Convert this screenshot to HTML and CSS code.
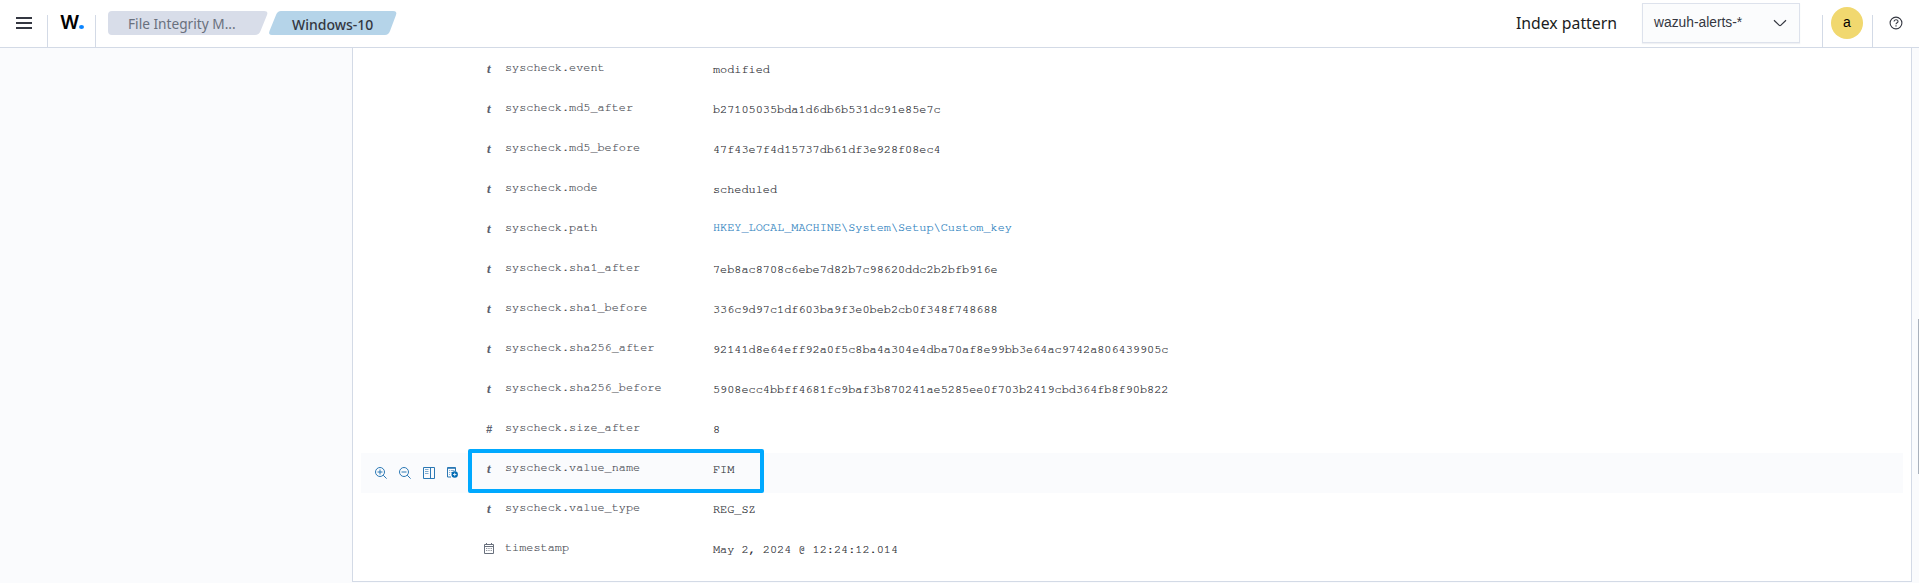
FILE: index.html
```html
<!DOCTYPE html>
<html lang="en">
<head>
<meta charset="utf-8">
<title>File Integrity Monitoring</title>
<link rel="stylesheet" href="styles.css">
</head>
<body>
<header class="header">
  <button class="menu" aria-label="Menu"><span></span><span></span><span></span></button>
  <div class="logo">W<i class="logo-dot"></i></div>
  <nav class="crumbs">
    <span class="crumb crumb-first">File Integrity M...</span>
    <span class="crumb crumb-last">Windows-10</span>
  </nav>
  <div class="header-right">
    <span class="pattern-label">Index pattern</span>
    <div class="select"><span>wazuh-alerts-*</span>
      <svg width="14" height="8" viewBox="0 0 14 8"><path d="M1 1.2 6.3 6.4Q7 7 7.700 6.400L13 1.200" fill="none" stroke="#343741" stroke-width="1.2"/></svg>
    </div>
    <div class="user"><span class="avatar">a</span></div>
    <svg class="help" width="14" height="14" viewBox="0 0 14 14"><circle cx="7" cy="7" r="5.9" fill="none" stroke="#343741" stroke-width="1.1"/><path d="M5 5.6C5 3.2 9 3.2 9 5.4 9 6.8 7 6.7 7 8.3" fill="none" stroke="#343741" stroke-width="1.1"/><rect x="6.4" y="9.3" width="1.2" height="1.2" fill="#343741"/></svg>
  </div>
</header>
<main class="body">
  <section class="panel">
    <div class="row"><span class="type t">t</span><span class="name">syscheck.event</span><span class="value">modified</span></div>
    <div class="row"><span class="type t">t</span><span class="name">syscheck.md5_after</span><span class="value">b27105035bda1d6db6b531dc91e85e7c</span></div>
    <div class="row"><span class="type t">t</span><span class="name">syscheck.md5_before</span><span class="value">47f43e7f4d15737db61df3e928f08ec4</span></div>
    <div class="row"><span class="type t">t</span><span class="name">syscheck.mode</span><span class="value">scheduled</span></div>
    <div class="row"><span class="type t">t</span><span class="name">syscheck.path</span><a class="value link">HKEY_LOCAL_MACHINE\System\Setup\Custom_key</a></div>
    <div class="row"><span class="type t">t</span><span class="name">syscheck.sha1_after</span><span class="value">7eb8ac8708c6ebe7d82b7c98620ddc2b2bfb916e</span></div>
    <div class="row"><span class="type t">t</span><span class="name">syscheck.sha1_before</span><span class="value">336c9d97c1df603ba9f3e0beb2cb0f348f748688</span></div>
    <div class="row"><span class="type t">t</span><span class="name">syscheck.sha256_after</span><span class="value">92141d8e64eff92a0f5c8ba4a304e4dba70af8e99bb3e64ac9742a806439905c</span></div>
    <div class="row"><span class="type t">t</span><span class="name">syscheck.sha256_before</span><span class="value">5908ecc4bbff4681fc9baf3b870241ae5285ee0f703b2419cbd364fb8f90b822</span></div>
    <div class="row"><span class="type hash">#</span><span class="name">syscheck.size_after</span><span class="value">8</span></div>
    <div class="row hovered">
      <span class="actions">
        <svg width="12" height="12" viewBox="0 0 12 12"><circle cx="5" cy="5" r="4.5"/><path d="M2.5 5h5M5 2.5v5M8.2 8.2l3.4 3.4"/></svg>
        <svg width="12" height="12" viewBox="0 0 12 12"><circle cx="5" cy="5" r="4.5"/><path d="M2.5 5h5M8.2 8.2l3.4 3.4"/></svg>
        <svg width="12" height="12" viewBox="0 0 12 12"><path d="M.5.5h11v11H.5zM7.500.5v11"/><path class="faint" d="M2 2.500h3.500M2 4.500h3.500M2 6.500h3.500"/></svg>
        <svg width="12" height="12" viewBox="0 0 12 12"><path d="M8.500 4.500V.5h-8v9.500H4M.5 1.300h8"/><path class="faint" d="M2 3.500h.9M3.800 3.500H7.500M2 5.500h.9M3.800 5.500H6M2 7.500h.9"/><circle class="solid" cx="7.700" cy="7.500" r="3.200"/><path class="plus" d="M6 7.500h3.400M7.700 5.800v3.400"/></svg>
      </span>
      <span class="type t">t</span><span class="name">syscheck.value_name</span><span class="value">FIM</span>
      <span class="highlight"></span>
    </div>
    <div class="row"><span class="type t">t</span><span class="name">syscheck.value_type</span><span class="value">REG_SZ</span></div>
    <div class="row"><span class="type"><svg class="calendar" width="10" height="11" viewBox="0 0 10 11"><path d="M.5 1.500h9v9h-9zM.5 3.500h9M2.500 0v2M7.500 0v2" fill="none" stroke="#69707d"/><path d="M2 5.500h6M2 7.500h6" fill="none" stroke="#69707d" stroke-dasharray="1 .7" stroke-opacity=".75"/></svg></span><span class="name">timestamp</span><span class="value">May 2, 2024 @ 12:24:12.014</span></div>
  </section>
  <span class="thumb"></span>
</main>
</body>
</html>
```

FILE: styles.css
```css
* { box-sizing: border-box; }
body { margin: 0; height: 583px; overflow: hidden; background: #fafbfd; color: #343741; font-family: "Noto Sans", sans-serif; }
.header { display: flex; height: 48px; background: #fff; border-bottom: 1px solid #d3dae6; }
.menu { display: flex; flex-direction: column; gap: 3px; width: 47px; padding: 17px 0 0 16px; border: 0; background: none; }
.menu span { width: 16px; height: 2px; background: #343741; }
.logo { display: flex; align-items: baseline; width: 49px; height: 32px; margin-top: 15px; padding-left: 12px; border: solid #d3dae6; border-width: 0 1px; color: #000; font: 600 19px/16px Inter, sans-serif; }
.logo-dot { width: 5px; height: 4px; border-radius: 50%; background: #0a84ff; }
.crumbs { display: flex; gap: 1px; padding: 11px 0 0 12px; }
.crumb { height: 24px; white-space: nowrap; font-size: 13.7px; line-height: 26px; }
.crumb-first { width: 160px; padding-left: 20px; background: #d8dde9; color: #69707d; clip-path: path("M4 0H156Q160.500 0 159 4L152.500 20Q151 24 147 24H4Q0 24 0 20V4Q0 0 4 0Z"); }
.crumb-last { width: 129px; padding-left: 23px; background: #b5d4e9; color: #343741; font-size: 14px; font-weight: 500; line-height: 27px; clip-path: path("M12 0H124Q128.500 0 127 4L121 20Q119.500 24 116 24H3Q-1 24 .5 20L7 4Q8.500 0 12 0Z"); }
.header-right { display: flex; margin-left: auto; }
.pattern-label { padding-right: 25px; color: #1a1c21; font-size: 15.8px; line-height: 46px; }
.select { display: flex; align-items: center; justify-content: space-between; width: 158px; height: 40px; margin-top: 3px; padding: 0 12px 1px 11px; border: 1px solid #dde2ec; background: #fbfcfd; box-shadow: 0 1px 1px rgba(152, 162, 179, .15); font: 13.8px/20px "Liberation Sans", sans-serif; }
.user { width: 51px; height: 32px; margin: 15px 0 0 22px; padding-left: 8px; border: solid #d3dae6; border-width: 0 1px; }
.avatar { display: block; width: 32px; height: 32px; margin-top: -8px; border-radius: 50%; background: #f1d86f; color: #000; text-align: center; font: 14px/30px "Liberation Sans", sans-serif; }
.help { margin: 16px 16px 0 16px; }
.body { position: relative; padding: 0 7px 0 352px; height: 535px; }
.panel { height: 534px; padding: 5px 8px; border: solid #d3dae6; border-width: 0 1px 1px; background: #fff; }
.row { position: relative; display: grid; grid-template-columns: 116px 28px 208px 1fr; height: 40px; font: 11.87px/18px "Courier 10 Pitch", "Nimbus Mono PS", "FreeMono", "Liberation Mono", monospace; }
.hovered { background: #fafbfd; }
.actions { display: flex; gap: 12px; padding: 14px 0 0 14px; }
.actions svg { fill: none; stroke: #2b78b4; stroke-width: 1; }
.actions .faint { stroke-opacity: .6; }
.actions .solid { fill: #006bb4; stroke: none; }
.actions .plus { stroke: #fff; stroke-width: .8; }
.type { grid-column: 2; padding-left: 9px; color: #69707d; }
.t { padding: 7px 0 0 10px; color: #5a616e; font: italic bold 13px/18px "Liberation Serif", serif; -webkit-text-stroke: .1px #5a616e; }
.hash { padding-top: 7px; color: #5a616e; font: italic bold 11px/18px "Liberation Sans", sans-serif; }
.calendar { display: block; margin: 10px 0 0 -2px; }
.name, .value { -webkit-text-stroke-width: .16px; }
.name { padding-top: 6px; color: #43464e; }
.value { padding-top: 8px; color: #202228; }
.link { padding-top: 6px; color: #1c7abb; }
.highlight { position: absolute; left: 107px; top: -4px; width: 296px; height: 44px; border: 4px solid #00a9ff; border-radius: 2px; }
.thumb { position: absolute; right: 0; top: 271px; width: 1px; height: 155px; background: #a9b1bc; }
```
